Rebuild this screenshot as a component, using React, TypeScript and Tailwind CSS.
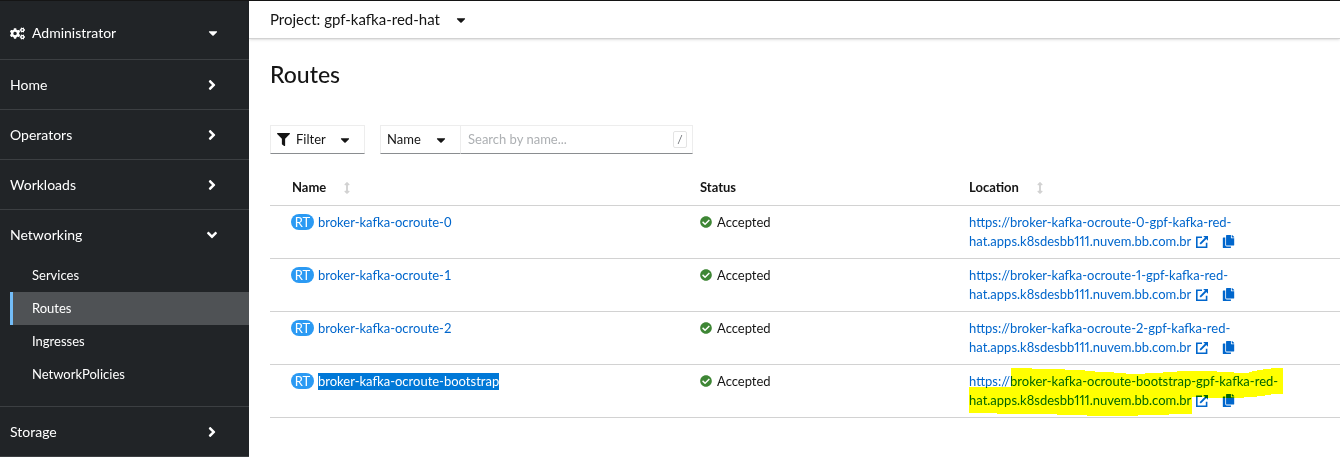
import React from "react";
import {
  FaAngleDown,
  FaAngleRight,
  FaArrowsAltV,
  FaCaretDown,
  FaCheckCircle,
  FaCogs,
  FaCopy,
  FaFilter,
} from "react-icons/fa";

type Route = { name: string; url: string; selected?: boolean; marked?: boolean };

const DOMAIN = "gpf-kafka-red-hat.apps.k8sdesbb111.nuvem.bb.com.br";

const routes: Route[] = [
  { name: "broker-kafka-ocroute-0", url: `https://broker-kafka-ocroute-0-${DOMAIN}` },
  { name: "broker-kafka-ocroute-1", url: `https://broker-kafka-ocroute-1-${DOMAIN}` },
  { name: "broker-kafka-ocroute-2", url: `https://broker-kafka-ocroute-2-${DOMAIN}` },
  {
    name: "broker-kafka-ocroute-bootstrap",
    url: `https://broker-kafka-ocroute-bootstrap-${DOMAIN}`,
    selected: true,
    marked: true,
  },
];

const networkingLinks = ["Services", "Routes", "Ingresses", "NetworkPolicies"];

function ExternalLinkIcon() {
  return (
    <svg viewBox="0 0 12 12" className="size-3" fill="none" stroke="currentColor" aria-hidden="true">
      <path d="M6 1.3H.8v9.9h9.8V6.8" strokeWidth="1.6" />
      <path d="M4.2 7.8 10 2" strokeWidth="1.8" />
      <path d="M7.2 0H12v4.8z" fill="currentColor" stroke="none" />
    </svg>
  );
}

function NavSection({ label, open = false, children }: { label: string; open?: boolean; children?: React.ReactNode }) {
  return (
    <li className="border-b border-[#3c3f42]">
      <button
        type="button"
        aria-expanded={open}
        className="flex h-[49px] w-full items-center justify-between pr-[29px] pl-[10px] text-left text-sm"
      >
        {label}
        {open ? <FaAngleDown className="size-4" /> : <FaAngleRight className="size-4" />}
      </button>
      {children}
    </li>
  );
}

function Sidebar() {
  return (
    <aside className="w-[249px] shrink-0 bg-[#212427] text-white">
      <button
        type="button"
        className="flex h-[59px] w-full items-center border-b border-[#3c3f42] pt-[6px] pr-[29px] pl-[10px] text-left text-sm"
      >
        <FaCogs className="mr-[7px] size-[15px]" />
        <span className="flex-1">Administrator</span>
        <FaCaretDown className="size-[14px]" />
      </button>
      <nav aria-label="Main">
        <ul>
          <NavSection label="Home" />
          <NavSection label="Operators" />
          <NavSection label="Workloads" />
          <NavSection label="Networking" open>
            <ul className="pb-[15px] pl-[10px]">
              {networkingLinks.map((label) => (
                <li key={label}>
                  <a
                    href="#"
                    aria-current={label === "Routes" ? "page" : undefined}
                    className={
                      label === "Routes"
                        ? "flex h-[33px] items-center border-l-3 border-[#73bcf7] bg-[#4f5255] pl-[19px] text-[13px]"
                        : "flex h-[33px] items-center pl-[22px] text-[13px]"
                    }
                  >
                    {label}
                  </a>
                </li>
              ))}
            </ul>
          </NavSection>
          <NavSection label="Storage" />
        </ul>
      </nav>
    </aside>
  );
}

function Toolbar() {
  return (
    <div className="mt-[37px] flex items-center gap-[15px]">
      <button
        type="button"
        className="flex h-[29px] w-[95px] items-center border border-[#ededed] border-b-[#8a8d90] px-[6px]"
      >
        <FaFilter className="mr-[6px] size-[13px]" />
        <span className="flex-1 text-left">Filter</span>
        <FaCaretDown className="mr-[6px] size-[14px]" />
      </button>
      <div className="flex">
        <button
          type="button"
          className="flex h-[29px] w-[81px] items-center justify-between border border-[#ededed] border-b-[#8a8d90] pr-[12px] pl-[6px]"
        >
          Name
          <FaCaretDown className="size-[14px]" />
        </button>
        <div className="flex h-[29px] w-[232px] items-center border border-l-0 border-[#ededed] border-b-[#8a8d90] pr-[5px] pl-[7px]">
          <input
            type="text"
            aria-label="Search by name"
            placeholder="Search by name..."
            className="min-w-0 flex-1 outline-none placeholder:text-[#adb0b3]"
          />
          <kbd className="flex h-[17px] w-[14px] items-center justify-center rounded-xs border border-[#e4e4e4] font-[Lato,sans-serif] text-xs text-[#6a6e73]">
            /
          </kbd>
        </div>
      </div>
    </div>
  );
}

function Highlighter() {
  return (
    <svg
      viewBox="0 0 314 48"
      className="pointer-events-none absolute top-[3px] left-0 h-12 w-[314px] mix-blend-multiply"
      aria-hidden="true"
    >
      <path
        fill="#ffff00"
        d="M42 0H63V1H96V2H116V3H126V4H145V5H157V6H176V5H194V4H208V3H248V4H265V5H280V4H283V3H288V2H294V1H302V0H314V26H302V27H296V28H288V29H275V30H236V29H223V46H200V47H169V48H118V47H88V46H28V45H0V19H42Z"
      />
    </svg>
  );
}

function RoutesTable() {
  return (
    <table className="mt-[17px] w-full table-fixed text-left">
      <thead>
        <tr className="h-[34px] border-b border-[#d2d2d2]">
          <th className="w-[430px] pl-[22px] font-bold">
            <button type="button" className="flex items-center gap-[15px]">
              Name <FaArrowsAltV className="size-3 text-[#d2d2d2]" />
            </button>
          </th>
          <th className="w-[269px] font-bold">Status</th>
          <th className="font-bold">
            <button type="button" className="flex items-center gap-[15px]">
              Location <FaArrowsAltV className="size-3 text-[#d2d2d2]" />
            </button>
          </th>
        </tr>
      </thead>
      <tbody>
        {routes.map((route) => (
          <tr key={route.name} className="h-[53px] border-b border-[#d2d2d2] align-top">
            <td className="pt-2 pl-[21px]">
              <div className="flex items-center">
                <span className="mr-1 flex h-4 w-[23px] items-center justify-center rounded-full bg-[#2b9af3] text-white">
                  RT
                </span>
                <a href="#" className={route.selected ? "bg-[#0078d7] text-white" : "text-[#0066cc]"}>
                  {route.name}
                </a>
              </div>
            </td>
            <td className="pt-2">
              <span className="flex items-center gap-[5px]">
                <FaCheckCircle className="size-3 text-[#3e8635]" />
                Accepted
              </span>
            </td>
            <td className="relative pt-[7px] text-[#0066cc]">
              <div className="max-w-[320px] leading-[19px]">
                <a href="#" className="proportional-nums">
                  {route.url}
                  <span className="ml-[5px] inline-block align-[-2px]">
                    <ExternalLinkIcon />
                  </span>
                </a>
                <button type="button" aria-label="Copy to clipboard" className="ml-[14px] align-[-2px]">
                  <FaCopy className="size-[13px]" />
                </button>
              </div>
              {route.marked && <Highlighter />}
            </td>
          </tr>
        ))}
      </tbody>
    </table>
  );
}

export default function App() {
  return (
    <div className="flex min-h-screen border-t border-[#151515] bg-white font-[Lato,sans-serif] text-[13px] leading-[17px] text-[#151515]">
      <Sidebar />
      <main className="min-w-0 flex-1">
        <div className="flex h-[38px] items-center border-b border-[#d2d2d2] pl-[21px] shadow-sm">
          <button type="button" className="flex items-center gap-[14px] text-[15px]">
            Project: gpf-kafka-red-hat
            <FaCaretDown className="size-[14px]" />
          </button>
        </div>
        <div className="pt-[21px] pl-[21px]">
          <h1 className="text-[23px] leading-7 font-medium">Routes</h1>
          <Toolbar />
          <RoutesTable />
        </div>
      </main>
    </div>
  );
}
